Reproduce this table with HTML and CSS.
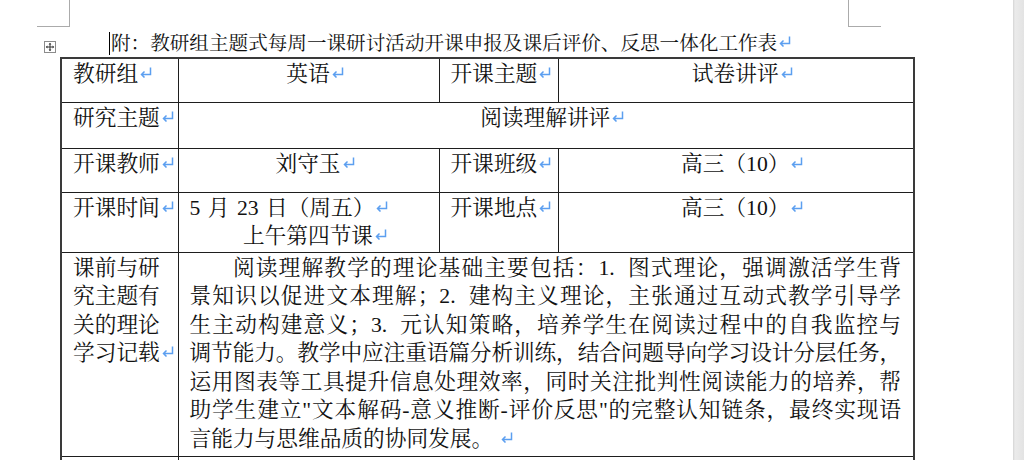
FILE: index.html
```html
<!DOCTYPE html>
<html lang="zh-CN">
<head>
<meta charset="utf-8">
<title>工作表</title>
<link rel="stylesheet" href="styles.css">
</head>
<body>
<div class="viewport">
  <div class="page">
    <span class="crop crop-tl"></span>
    <span class="crop crop-tr"></span>
    <p class="title"><span class="caret"></span>附：教研组主题式每周一课研讨活动开课申报及课后评价、反思一体化工作表<i class="ret"><svg viewBox="0 0 13 11" width="13" height="11"><path d="M11.5 0.5V7.5H2.5M5.5 4.5L2.5 7.5L5.5 10.5"/></svg></i></p>
    <div class="table-wrap">
      <span class="move-handle"><svg viewBox="0 0 12 12" width="12" height="12"><rect x="0.5" y="0.5" width="11" height="11" class="mh-box"/><path class="mh-cross" d="M6 2.5V9.5M2.5 6H9.5"/><path class="mh-head" d="M6 1.8L4.6 3.4H7.4ZM6 10.2L4.6 8.6H7.4ZM1.8 6L3.4 4.6V7.4ZM10.2 6L8.6 4.6V7.4Z"/></svg></span>
      <table class="sheet">
        <colgroup>
          <col class="c1"><col class="c2"><col class="c3"><col class="c4">
        </colgroup>
        <tr class="r1">
          <td>教研组<i class="ret"><svg viewBox="0 0 13 11" width="13" height="11"><path d="M11.5 0.5V7.5H2.5M5.5 4.5L2.5 7.5L5.5 10.5"/></svg></i></td>
          <td class="center">英语<i class="ret"><svg viewBox="0 0 13 11" width="13" height="11"><path d="M11.5 0.5V7.5H2.5M5.5 4.5L2.5 7.5L5.5 10.5"/></svg></i></td>
          <td>开课主题<i class="ret"><svg viewBox="0 0 13 11" width="13" height="11"><path d="M11.5 0.5V7.5H2.5M5.5 4.5L2.5 7.5L5.5 10.5"/></svg></i></td>
          <td class="center">试卷讲评<i class="ret"><svg viewBox="0 0 13 11" width="13" height="11"><path d="M11.5 0.5V7.5H2.5M5.5 4.5L2.5 7.5L5.5 10.5"/></svg></i></td>
        </tr>
        <tr class="r2">
          <td>研究主题<i class="ret"><svg viewBox="0 0 13 11" width="13" height="11"><path d="M11.5 0.5V7.5H2.5M5.5 4.5L2.5 7.5L5.5 10.5"/></svg></i></td>
          <td class="center" colspan="3">阅读理解讲评<i class="ret"><svg viewBox="0 0 13 11" width="13" height="11"><path d="M11.5 0.5V7.5H2.5M5.5 4.5L2.5 7.5L5.5 10.5"/></svg></i></td>
        </tr>
        <tr class="r3">
          <td>开课教师<i class="ret"><svg viewBox="0 0 13 11" width="13" height="11"><path d="M11.5 0.5V7.5H2.5M5.5 4.5L2.5 7.5L5.5 10.5"/></svg></i></td>
          <td class="center">刘守玉<i class="ret"><svg viewBox="0 0 13 11" width="13" height="11"><path d="M11.5 0.5V7.5H2.5M5.5 4.5L2.5 7.5L5.5 10.5"/></svg></i></td>
          <td>开课班级<i class="ret"><svg viewBox="0 0 13 11" width="13" height="11"><path d="M11.5 0.5V7.5H2.5M5.5 4.5L2.5 7.5L5.5 10.5"/></svg></i></td>
          <td class="center">高三（10）<i class="ret"><svg viewBox="0 0 13 11" width="13" height="11"><path d="M11.5 0.5V7.5H2.5M5.5 4.5L2.5 7.5L5.5 10.5"/></svg></i></td>
        </tr>
        <tr class="r4">
          <td>开课时间<i class="ret"><svg viewBox="0 0 13 11" width="13" height="11"><path d="M11.5 0.5V7.5H2.5M5.5 4.5L2.5 7.5L5.5 10.5"/></svg></i></td>
          <td>
            <div class="line-left"><span class="date">5 月 23 日（周五）</span><i class="ret"><svg viewBox="0 0 13 11" width="13" height="11"><path d="M11.5 0.5V7.5H2.5M5.5 4.5L2.5 7.5L5.5 10.5"/></svg></i></div>
            <div class="line-center">上午第四节课<i class="ret"><svg viewBox="0 0 13 11" width="13" height="11"><path d="M11.5 0.5V7.5H2.5M5.5 4.5L2.5 7.5L5.5 10.5"/></svg></i></div>
          </td>
          <td>开课地点<i class="ret"><svg viewBox="0 0 13 11" width="13" height="11"><path d="M11.5 0.5V7.5H2.5M5.5 4.5L2.5 7.5L5.5 10.5"/></svg></i></td>
          <td class="center">高三（10）<i class="ret"><svg viewBox="0 0 13 11" width="13" height="11"><path d="M11.5 0.5V7.5H2.5M5.5 4.5L2.5 7.5L5.5 10.5"/></svg></i></td>
        </tr>
        <tr class="r5">
          <td>课前与研究主题有关的理论学习记载<i class="ret"><svg viewBox="0 0 13 11" width="13" height="11"><path d="M11.5 0.5V7.5H2.5M5.5 4.5L2.5 7.5L5.5 10.5"/></svg></i></td>
          <td colspan="3" class="body-text">
            <span class="jl first">阅读理解教学的理论基础主要包括：1.&nbsp; 图式理论，强调激活学生背</span>
            <span class="jl">景知识以促进文本理解；2.&nbsp; 建构主义理论，主张通过互动式教学引导学</span>
            <span class="jl">生主动构建意义；3.&nbsp; 元认知策略，培养学生在阅读过程中的自我监控与</span>
            <span class="jl tight">调节能力。教学中应注重语篇分析训练，结合问题导向学习设计分层任务，</span>
            <span class="jl">运用图表等工具提升信息处理效率，同时关注批判性阅读能力的培养，帮</span>
            <span class="jl">助学生建立"文本解码-意义推断-评价反思"的完整认知链条，最终实现语</span>
            <span class="jl last">言能力与思维品质的协同发展。<i class="ret gap"><svg viewBox="0 0 13 11" width="13" height="11"><path d="M11.5 0.5V7.5H2.5M5.5 4.5L2.5 7.5L5.5 10.5"/></svg></i></span>
          </td>
        </tr>
        <tr class="r6">
          <td></td>
          <td colspan="3"></td>
        </tr>
      </table>
    </div>
  </div>
  <div class="edge"></div>
</div>
</body>
</html>
```

FILE: styles.css
```css
html, body {
  margin: 0;
  padding: 0;
  background: #ffffff;
}

body {
  font-family: "Liberation Serif", "Noto Serif CJK SC", "Noto Sans CJK SC", serif;
  color: #111111;
}

.viewport {
  display: flex;
  height: 460px;
  overflow: hidden;
}

.page {
  flex: 1;
  position: relative;
  padding: 31px 0 0 60px;
}

.edge {
  width: 11px;
  background: linear-gradient(to right, #d4d4d4 0, #ebebeb 2px, #e3e3e3 100%);
}

/* crop marks of the page */
.crop {
  position: absolute;
  top: 0;
  width: 32px;
  height: 26px;
  border-bottom: 1.5px solid #ababab;
}

.crop-tl {
  left: 37px;
  border-right: 1.5px solid #ababab;
}

.crop-tr {
  left: 848px;
  border-left: 1.5px solid #ababab;
}

.title {
  margin: 0 0 0 49px;
  height: 26px;
  line-height: 26px;
  font-size: 19.6px;
  white-space: nowrap;
}

.caret {
  display: inline-block;
  width: 1px;
  height: 23px;
  background: #000000;
  vertical-align: -5px;
  margin-right: 1px;
}

.ret {
  display: inline-block;
  width: 0;
  vertical-align: baseline;
}

.ret.gap {
  margin-left: 6px;
}

.ret svg {
  display: block;
  margin: 0 0 3px 1px;
  fill: none;
  stroke: #5c9ff0;
  stroke-width: 1.5;
}

.date {
  word-spacing: 2px;
}

.table-wrap {
  position: relative;
}

.move-handle {
  position: absolute;
  left: -16px;
  top: -16px;
  width: 12px;
  height: 12px;
}

.move-handle svg {
  display: block;
}

.mh-box {
  fill: #ffffff;
  stroke: #8c8c8c;
  stroke-width: 1;
}

.mh-cross {
  stroke: #333333;
  stroke-width: 1;
  fill: none;
}

.mh-head {
  fill: #333333;
}

.sheet {
  width: 853px;
  table-layout: fixed;
  border-collapse: collapse;
  border: 2px solid #3a3a3a;
  font-size: 21.7px;
  line-height: 28.5px;
}

.c1 { width: 117px; }
.c2 { width: 261px; }
.c3 { width: 119px; }
.c4 { width: 356px; }

.sheet td {
  border: 1px solid #1e1e1e;
  padding: 1px 12px 0 11px;
  vertical-align: top;
  text-align: left;
}

.sheet td.center {
  text-align: center;
}

.r1 { height: 44px; }
.r2 { height: 46px; }
.r3 { height: 44px; }
.r4 { height: 60px; }
.r5 { height: 204px; }
.r6 { height: 40px; }

.line-left {
  text-align: left;
}

.line-center {
  text-align: center;
}

.body-text .jl {
  display: block;
  text-align: justify;
  text-align-last: justify;
  white-space: nowrap;
}

.body-text .jl.first {
  text-indent: 2em;
}

.body-text .jl.tight {
  letter-spacing: -0.25px;
}

.body-text .jl.last {
  text-align: left;
  text-align-last: left;
}
```
